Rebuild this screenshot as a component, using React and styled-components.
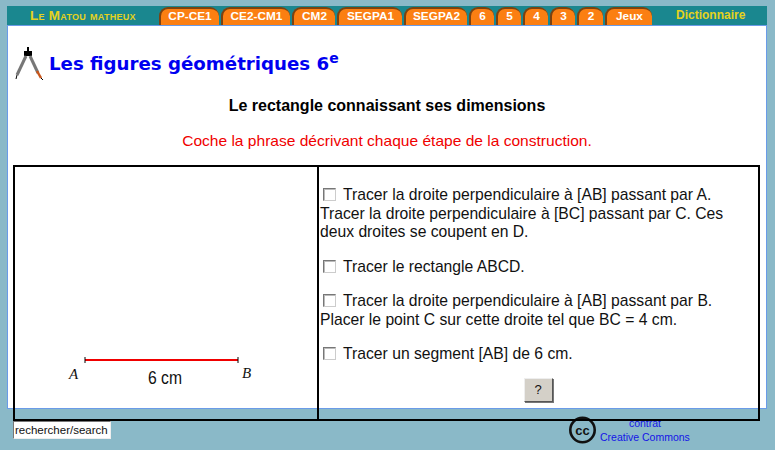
import styled, { createGlobalStyle } from "styled-components";

const GlobalStyle = createGlobalStyle`
    html, body {
        background-color: #8ab9c8;
        font-family: "Liberation Sans", Arial, sans-serif;
        height: 100%;
        margin: 0;
        overflow: hidden;
    }
`;

const Pagina = styled.div`
    padding: 6px 8px 0 7px;
`;

const BarraNav = styled.nav`
    align-items: flex-end;
    background-color: #1a878f;
    display: flex;
    height: 19px;
    width: 760px;
`;

const Marca = styled.div`
    color: #e6d21c;
    font-size: 13.5px;
    font-variant: small-caps;
    font-weight: bold;
    letter-spacing: 0.27px;
    line-height: 19px;
    padding-left: 23px;
    width: 130px;
    white-space: nowrap;
`;

const Abas = styled.div`
    display: flex;
    gap: 2px;
    margin-left: -1px;
`;

const Aba = styled.a`
    background-color: #fb7f12;
    border-left: 2px solid #7c4210;
    border-radius: 9px 9px 0 0;
    border-top: 2px solid #7c4210;
    box-sizing: border-box;
    color: #fff;
    font-size: 11.8px;
    font-weight: bold;
    height: 18px;
    line-height: 14px;
    text-align: center;
    width: ${(props) => props.$largura}px;
`;

const Dicionario = styled.a`
    color: #e6d21c;
    font-size: 12px;
    font-weight: bold;
    line-height: 19px;
    margin-left: 24px;
`;

const Conteudo = styled.main`
    background-color: #fff;
    border: 1px solid #6a9be8;
    box-sizing: border-box;
    height: 384px;
    padding: 0 5px;
    width: 760px;
`;

const Cabecalho = styled.header`
    align-items: flex-start;
    display: flex;
    height: 55px;
    padding: 21px 0 0 1px;
`;

const Titulo = styled.h1`
    color: #0000f0;
    font-family: "DejaVu Sans", Verdana, sans-serif;
    font-size: 18.2px;
    font-weight: bold;
    line-height: 24px;
    margin: 5px 0 0 5px;

    sup {
        font-size: 14px;
        line-height: 0;
    }
`;

const Subtitulo = styled.h2`
    font-size: 16px;
    font-weight: bold;
    line-height: 18px;
    margin: -5px 0 0;
    text-align: center;
`;

const Instrucao = styled.p`
    color: #f00000;
    font-size: 15.55px;
    line-height: 18px;
    margin: 17px 0 15px;
    text-align: center;
`;

const Tabela = styled.div`
    border: 2px solid #000;
    box-sizing: border-box;
    display: grid;
    grid-template-columns: 304px 1fr;
    height: 256px;
    position: relative;
    width: 747px;
    z-index: 1;
`;

const CelulaFigura = styled.div`
    align-items: flex-end;
    border-right: 2px solid #000;
    display: flex;
`;

const CelulaEtapas = styled.div`
    color: #111;
    font-size: 15.7px;
    line-height: 18.4px;
    padding: 19.4px 30px 0 1px;
`;

const Etapa = styled.label`
    display: block;
    margin-bottom: 16.2px;
`;

const Caixa = styled.input.attrs({ type: "checkbox" })`
    appearance: none;
    background-color: #fff;
    border: 1px solid #777;
    border-bottom-color: #ccc;
    border-right-color: #ccc;
    box-shadow: inset 1px 1px 0 #bbb;
    height: 13px;
    margin: 0 3px 0 3px;
    vertical-align: -1px;
    width: 13px;
`;

const LinhaBotao = styled.div`
    margin-top: -2px;
    text-align: center;
    width: 436px;
`;

const BotaoAjuda = styled.button`
    background-color: #d4d0c8;
    border: 1px solid;
    border-color: #eee #555 #555 #eee;
    box-shadow: 1px 1px 0 #777;
    color: #111;
    font-family: "Liberation Sans", Arial, sans-serif;
    font-size: 13px;
    height: 24px;
    padding: 0;
    width: 29px;
`;

const Rodape = styled.footer`
    align-items: flex-start;
    display: flex;
    padding: 12px 0 0 6px;
`;

const Busca = styled.input`
    background-color: #fff;
    border: 1px solid;
    border-color: #777 #eee #eee #777;
    box-sizing: border-box;
    color: #111;
    font-family: "Liberation Sans", Arial, sans-serif;
    font-size: 11.5px;
    height: 18px;
    padding: 0 1px;
    width: 98px;
`;

const Licenca = styled.div`
    align-items: flex-start;
    display: flex;
    gap: 3px;
    margin-left: 457px;
    margin-top: -5px;
`;

const LicencaTexto = styled.a`
    color: #1414e6;
    font-size: 10.5px;
    line-height: 14px;
    text-align: center;
`;

function Compasso() {
    return (
        <svg width="30" height="34" viewBox="0 0 30 34">
            <rect x="10" y="4" width="8" height="5" fill="#000" />
            <rect x="13" y="0" width="2" height="5" fill="#000" />
            <path d="M12 9 L3 28" stroke="#777" strokeWidth="3" />
            <path d="M16 9 L24 26" stroke="#777" strokeWidth="3" />
            <path d="M23 24 L27 31" stroke="#c8561c" strokeWidth="2.5" />
            <path d="M3 28 L2 32" stroke="#000" strokeWidth="1" />
            <path d="M27 31 L29 33" stroke="#000" strokeWidth="1" />
        </svg>
    );
}

function FiguraSegmento() {
    return (
        <svg width="300" height="70" viewBox="0 0 300 70">
            <line x1="70" y1="11" x2="223" y2="11" stroke="#f00000" strokeWidth="2" />
            <line x1="70" y1="8" x2="70" y2="14" stroke="#000" />
            <line x1="223" y1="8" x2="223" y2="14" stroke="#000" />
            <text x="54" y="30" fontFamily="Liberation Serif" fontStyle="italic" fontSize="15" fill="#111">A</text>
            <text x="227" y="29" fontFamily="Liberation Serif" fontStyle="italic" fontSize="15" fill="#111">B</text>
            <text x="133" y="35" fontFamily="Liberation Sans" fontSize="19" textLength="34" lengthAdjust="spacingAndGlyphs" fill="#111">6 cm</text>
        </svg>
    );
}

function IconeCC() {
    return (
        <svg width="29" height="28" viewBox="0 0 29 28">
            <circle cx="14.5" cy="14" r="12.2" fill="none" stroke="#111" strokeWidth="2.6" />
            <text x="14.5" y="18.5" textAnchor="middle" fontFamily="Liberation Sans" fontWeight="bold" fontSize="13" fill="#111">cc</text>
        </svg>
    );
}

const abas = [
    ["CP-CE1", 60], ["CE2-CM1", 69], ["CM2", 43], ["SEGPA1", 65], ["SEGPA2", 63],
    ["6", 25], ["5", 25], ["4", 25], ["3", 25], ["2", 26], ["Jeux", 47],
];

export default function App() {
    return (
        <>
            <GlobalStyle />
            <Pagina>
                <BarraNav>
                    <Marca>Le Matou matheux</Marca>
                    <Abas>
                        {abas.map(([nome, largura]) => (
                            <Aba key={nome} $largura={largura}>{nome}</Aba>
                        ))}
                    </Abas>
                    <Dicionario>Dictionnaire</Dicionario>
                </BarraNav>

                <Conteudo>
                    <Cabecalho>
                        <Compasso />
                        <Titulo>Les figures géométriques 6<sup>e</sup></Titulo>
                    </Cabecalho>

                    <Subtitulo>Le rectangle connaissant ses dimensions</Subtitulo>
                    <Instrucao>Coche la phrase décrivant chaque étape de la construction.</Instrucao>

                    <Tabela>
                        <CelulaFigura>
                            <FiguraSegmento />
                        </CelulaFigura>
                        <CelulaEtapas>
                            <Etapa>
                                <Caixa /> Tracer la droite perpendiculaire à [AB] passant par A.<br />
                                Tracer la droite perpendiculaire à [BC] passant par C. Ces deux droites se coupent en D.
                            </Etapa>
                            <Etapa>
                                <Caixa /> Tracer le rectangle ABCD.
                            </Etapa>
                            <Etapa>
                                <Caixa /> Tracer la droite perpendiculaire à [AB] passant par B.<br />
                                Placer le point C sur cette droite tel que BC = 4 cm.
                            </Etapa>
                            <Etapa>
                                <Caixa /> Tracer un segment [AB] de 6 cm.
                            </Etapa>
                            <LinhaBotao>
                                <BotaoAjuda>?</BotaoAjuda>
                            </LinhaBotao>
                        </CelulaEtapas>
                    </Tabela>
                </Conteudo>

                <Rodape>
                    <Busca defaultValue="rechercher/search" />
                    <Licenca>
                        <IconeCC />
                        <LicencaTexto>
                            <div>contrat</div>
                            <div>Creative Commons</div>
                        </LicencaTexto>
                    </Licenca>
                </Rodape>
            </Pagina>
        </>
    );
}
